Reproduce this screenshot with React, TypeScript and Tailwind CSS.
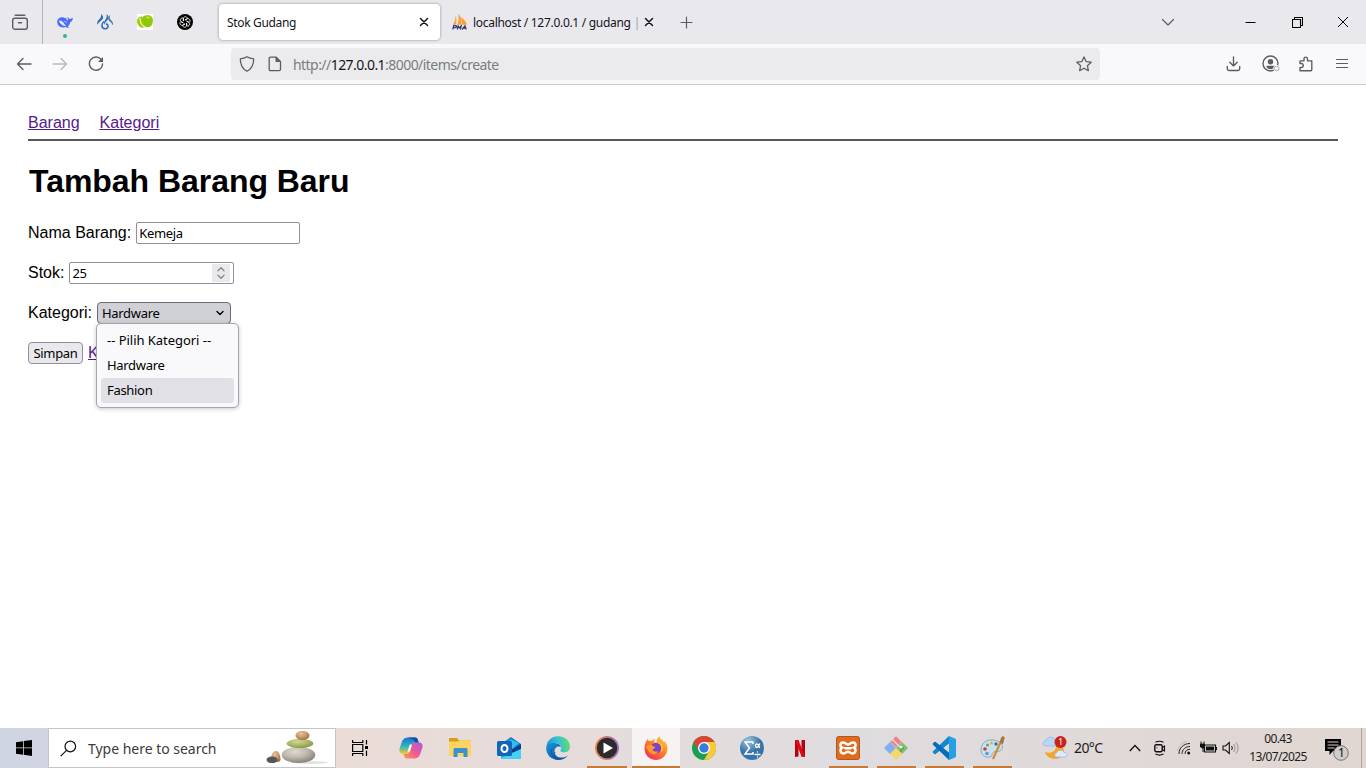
import React from "react";

type SvgProps = { s?: number; box?: string; className?: string; children: React.ReactNode };

function Svg({ s = 16, box = "0 0 16 16", className = "", children }: SvgProps) {
  return (
    <svg width={s} height={s} viewBox={box} fill="none" className={`block shrink-0 ${className}`}>
      {children}
    </svg>
  );
}

function Line({ s = 16, box = "0 0 16 16", d, w = 1.25, color = "#5b5b66" }: { s?: number; box?: string; d: string; w?: number; color?: string }) {
  return (
    <Svg s={s} box={box}>
      <path d={d} stroke={color} strokeWidth={w} strokeLinecap="round" strokeLinejoin="round" />
    </Svg>
  );
}

function Cross() {
  return <Line s={10} box="0 0 10 10" d="M1.500 1.500l7 7M8.500 1.500l-7 7" w={1.5} color="#15141a" />;
}

function TabStrip() {
  return (
    <header className="flex h-11 items-center bg-[#e9e9ed]">
      <div className="flex h-full w-[43px] items-center justify-center border-r border-[#b4b4ba] pr-0.5">
        <Svg>
          <path d="M3.200 1.200h9.600" stroke="#5b5b66" strokeWidth="1.400" strokeLinecap="round" />
          <rect x=".7" y="4.200" width="14.600" height="11" rx="2" stroke="#5b5b66" strokeWidth="1.400" />
          <path d="M6.500 8.800h3" stroke="#5b5b66" strokeWidth="1.500" strokeLinecap="round" />
        </Svg>
      </div>
      <div className="ml-[2px] flex h-full items-center">
        <div className="relative flex w-10 items-center justify-center">
          <Svg>
            <path d="M.2 7.600C.3 4.800 2.500 3.200 5 3.300c1.400 0 2.100.3 2.900.9.500-.4 1-.5 1.500-.3-.5.500-.3 1.100.2 1.700.4.500.8.900 1.200 1.200.1-1.600-.1-2.700-.5-3.500 1 .2 1.700.8 2.100 1.600 1.100.2 2-.2 3.400-1.100.1 2.200-.8 3.900-2.500 4.500-.3 1.700-1.200 3.100-2.500 4.100.6.4 1.200.5 1.900.7-1.200.8-2.800.7-3.900-.1C4.300 14.500.1 12.300.2 7.600z" fill="#4d6bfe" />
            <path d="M2 6.500c1.700-.2 3.400.7 4.500 2.300.8 1.200 1.600 2.400 2.700 2.800-1.500.7-3.500.1-4.900-1.300C3.100 9.200 2.100 7.900 2 6.500z" fill="#e9e9ed" />
            <path d="M7.400 7.500c.9-.3 1.800.3 2.100 1.300" stroke="#e9e9ed" strokeWidth=".8" />
          </Svg>
          <span className="absolute top-[20px] left-[18px] size-1 rounded-full bg-[#2fb597]" />
        </div>
        <div className="flex w-10 justify-center">
          <Svg>
            <path d="M4 0c2.500 1.500 2.800 4 .8 6C3.200 7.600 1.500 8.500.6 10.800-.3 8.500.5 7 2 5.400 3.600 3.700 4.500 2.500 4 0z" fill="#3070b4" />
            <path d="M9.500 0c2.500 1.800 2.800 4.300.7 6.500C8.700 8 7.800 9 8 11c-1-1.300-1.300-2.800-.3-4.200 1.500-2 2.600-3.800 1.800-6.800z" fill="#3070b4" />
            <path d="M7 7.500c-1.500 1.200-2.300 2.500-2.100 4.200.2 2 1.500 3.200 3.300 3.100 2-.1 3.200-1.600 2.700-3.300-.2-.9-1-1.500-1.900-1.400" stroke="#3070b4" strokeWidth="1.600" />
            <path d="M12.800 1.500c-.8 2.200-.4 3.300 1 4.700 1.400 1.300 2.300 2.700 1.800 4.600-.6-2-1.700-2.600-3-3.800-1.600-1.700-1.400-3.900.2-5.500z" fill="#3070b4" stroke="#3070b4" strokeWidth=".4" />
          </Svg>
        </div>
        <div className="flex w-10 justify-center">
          <Svg>
            <path fill="#fff" d="M0 0h16v16H0z" />
            <path d="M0 7c0-3 2.500-4.500 5-4.500L8 13c-4 2-8-1-8-6z" fill="#a5cb14" />
            <path d="M3 4c0 4 2 8 6 9.500" stroke="#eaf4a8" strokeWidth="1.200" />
            <path d="M5 5C5 2 8 1 10.500 1.200 14 1 16 3 15.900 6.500c0 4-2 6.800-5.200 6.800C7 13 5 9 5 5z" fill="#8fc80f" />
            <path d="M8.500 3.500c1.300-1.500 4-1.200 5.500.3-1.500 1-4.500 1-5.500-.3z" fill="#c4e62e" />
          </Svg>
        </div>
        <div className="flex w-10 justify-center">
          <Svg>
            <circle cx="8" cy="8" r="8" fill="#000" />
            <g stroke="#fff" strokeWidth=".8">
              {[0, 60, 120, 180, 240, 300].map((a) => (
                <path key={a} transform={`rotate(${a} 8 8)`} d="M6.400 7.100V4.600c0-2.400 3.700-2.500 4-.2M8 6.100l2.500-1.500" />
              ))}
            </g>
          </Svg>
        </div>
      </div>
      <div className="ml-[14px] flex h-9 w-[221px] items-center justify-between rounded bg-white pr-[11px] pl-2 shadow-[0_0_3px_rgba(0,0,0,0.4)]">
        <span className="pt-0.5 text-xs tracking-[-0.33px] whitespace-nowrap text-[#15141a]">Stok Gudang</span>
        <Cross />
      </div>
      <div className="ml-3 flex h-9 w-[202px] items-center">
        <Svg>
          <path d="M1 10.500C3 8.500 3.500 5 3.700 2.500c.7 2.500.8 5.500 0 8zM5.500 10.500C7 7.500 7 4 6.500.5c3 3 3.500 6.500 2.500 10zM10 10.500c.5-2.500 0-5-.8-7 2.800 1.500 5 4.500 5.300 7z" fill="#f89c2f" stroke="#f8ad55" strokeWidth=".5" />
          <g stroke="#34396d" strokeWidth="1.200">
            <path d="M.7 15.500l1-3.800h2.300c1 0 .8 2-.5 2H1.200M5.200 15.500l1-3.600 1 2 2-2-.8 3.600M10 15.500l3-3.700 1.200 3.700M11.200 14.200h2.600" />
          </g>
        </Svg>
        <div className="ml-[5px] flex w-[164px] pt-0.5 text-xs tracking-[-0.3px] whitespace-nowrap text-[#15141a]">
          localhost / 127.0.0.1 / gudang <span className="ml-[3px] text-[#9a9aa2]">|</span>
        </div>
        <div className="ml-[7px]"><Cross /></div>
      </div>
      <div className="ml-[26px]">
        <Line s={13} box="0 0 13 13" d="M6.500 1v11M1 6.500h11" w={1.2} />
      </div>
      <div className="ml-auto flex items-center">
        <Line s={14} box="0 0 14 14" d="M1.500 4.500L7 10l5.500-5.500" w={1.2} />
        <div className="ml-[70px]">
          <Svg s={11} box="0 0 11 11"><path d="M.5 5.500h10" stroke="#000" /></Svg>
        </div>
        <div className="ml-9">
          <Svg s={11} box="0 0 11 11"><path d="M.5 2.500h8v8h-8zM2.500 2.500v-2h8v8h-2" stroke="#000" strokeWidth="1.100" /></Svg>
        </div>
        <div className="mr-[17px] ml-[34px]">
          <Svg s={12} box="0 0 12 12"><path d="M1 1l10 10M11 1L1 11" stroke="#000" /></Svg>
        </div>
      </div>
    </header>
  );
}

function Toolbar() {
  return (
    <div className="flex h-[41px] items-center border-b border-[#cccccd] bg-[#f9f9fb]">
      <div className="ml-4 flex items-center gap-5">
        <Line d="M15 8H1.500M7 2.500L1.500 8 7 13.500" w={1.35} />
        <Line d="M1 8h13.500M9 2.500L14.500 8 9 13.500" color="#b9b9c0" w={1.35} />
        <Svg>
          <path d="M13 3.300A6.600 6.600 0 1 0 14.600 8" stroke="#5b5b66" strokeWidth="1.400" strokeLinecap="round" />
          <path d="M15 1v5H10z" fill="#5b5b66" />
        </Svg>
      </div>
      <div className="ml-[127px] flex h-8 w-[869px] items-center rounded bg-[#ebebed] px-2">
        <Line d="M8 .8c2 1.300 4.200 1.900 6.700 2.100 0 5.500-2 9.800-6.700 12.300C3.300 12.700 1.300 8.400 1.300 2.900 3.800 2.700 6 2.100 8 .8z" />
        <div className="ml-3">
          <Svg>
            <path d="M3.500 1.200h5.700L13.500 5.500v7.800c0 .8-.5 1.300-1.300 1.300H3.500c-.8 0-1.300-.5-1.300-1.300V2.500c0-.8.500-1.300 1.300-1.300z" stroke="#5b5b66" strokeWidth="1.300" />
            <path d="M8.500 1L13.500 6H9.500c-.6 0-1-.4-1-1z" fill="#5b5b66" />
          </Svg>
        </div>
        <span className="ml-[10px] pt-0.5 text-sm tracking-[-0.55px] whitespace-nowrap text-[#7b7b82]">
          http://<span className="text-[#15141a]">127.0.0.1</span>:8000/items/create
        </span>
        <div className="ml-auto">
          <Line d="M8 .9l2.100 4.700 5.100.6-3.800 3.500 1 5L8 12.200l-4.400 2.500 1-5L.8 6.200l5.100-.6z" />
        </div>
      </div>
      <div className="mr-4 ml-auto flex items-center gap-5">
        <Line d="M7.500.8v9M3.800 6.200l3.700 3.700 3.700-3.700M1.300 10.500v2.200c0 1 .8 1.800 1.800 1.800h8.800c1 0 1.800-.8 1.800-1.800v-2.200" w={1.35} />
        <Svg s={18} box="0 0 18 18" className="-mr-0.5">
          <circle cx="8.500" cy="8.500" r="7.500" stroke="#5b5b66" strokeWidth="1.400" />
          <circle cx="8.500" cy="6.800" r="2.700" fill="#5b5b66" />
          <path d="M4.300 10.700h8.400c-.3 2.200-2 3.600-4.200 3.600s-3.900-1.400-4.200-3.600z" fill="#5b5b66" />
          <circle cx="14.700" cy="13.400" r="3.300" fill="#f9f9fb" />
          <circle cx="14.700" cy="13.400" r="2.300" stroke="#ababb2" strokeWidth="1" />
        </Svg>
        <Line d="M2 7.500V4.800h4V3c0-2.600 3.500-2.600 3.500 0v1.800h4.300v9c0 .5-.4.900-.9.900H2v-3.200h1.300c2.600 0 2.600-4 0-4z" w={1.35} />
        <Line d="M2.500 3.500h11M2.500 7.500h11M2.500 11.500h11" w={1.2} />
      </div>
    </div>
  );
}

const control = "font-['Noto_Sans','Open_Sans',sans-serif] text-[13px] leading-[18px] tracking-[-0.32px] text-black";

function Page() {
  return (
    <main className="flex-1 bg-white px-7 pt-[29px] font-['Liberation_Sans',Arial,sans-serif] text-base leading-[18px] text-black">
      <nav className="flex gap-5 text-[#551a8b] underline">
        <a>Barang</a>
        <a>Kategori</a>
      </nav>
      <hr className="mt-[7px] h-0.5 border-0 bg-[#58585b]" />
      <h1 className="mt-[22px] ml-px text-[32px] leading-[37px] font-bold tracking-[-0.04px]">Tambah Barang Baru</h1>
      <form className="mt-[22px] flex flex-col items-start gap-[18px]">
        <label className="flex h-[22px] items-center">
          Nama Barang:
          <span className={`ml-[5px] flex h-[22px] w-[164px] items-center rounded-[2px] border border-[#8f8f9d] bg-white pl-0.5 ${control}`}>Kemeja</span>
        </label>
        <label className="flex h-[22px] items-center">
          Stok:
          <span className={`ml-[5px] flex h-[22px] w-[165px] items-center justify-between rounded-[2px] border border-[#8f8f9d] bg-white pr-[3px] pl-0.5 ${control}`}>
            25
            <span className="flex h-[18px] w-[18px] items-center justify-center bg-[#e9e9ed]">
              <Line s={14} box="0 0 14 14" d="M4 4.800l3-3 3 3M4 9.200l3 3 3-3" color="#85858d" w={1.3} />
            </span>
          </span>
        </label>
        <div className="flex h-[22px] items-center">
          Kategori:
          <div className="relative ml-[5px]">
            <div className={`flex h-[22px] w-[134px] items-center justify-between rounded-[4px] border border-[#6b6b78] bg-[#d0d0d7] pr-[5px] pl-1 ${control}`}>
              Hardware
              <Line s={10} box="0 0 10 10" d="M2 3.400l3 3 3-3" color="#000" w={1.4} />
            </div>
            <ul className={`absolute top-[21px] -left-px z-10 w-[143px] rounded-[5px] border border-[#a5a5ac] bg-[#f9f9fb] p-1 shadow-[0_1px_4px_rgba(0,0,0,0.22)] ${control}`}>
              <li className="h-[25px] rounded-[3px] px-1.5 leading-[25px] tracking-[-0.04px] whitespace-nowrap">-- Pilih Kategori --</li>
              <li className="h-[25px] rounded-[3px] px-1.5 leading-[25px]">Hardware</li>
              <li className="h-[25px] rounded-[3px] bg-[#e0e0e6] px-1.5 leading-[25px]">Fashion</li>
            </ul>
          </div>
        </div>
        <div className="flex h-[22px] items-center">
          <button type="button" className={`h-[22px] w-[55px] rounded-[4px] border border-[#8f8f9d] bg-[#e9e9ed] ${control}`}>Simpan</button>
          <a className="ml-[5px] text-[#551a8b] underline">K</a>
        </div>
      </form>
    </main>
  );
}

function Copilot() {
  return (
    <Svg s={24} box="0 0 24 24">
      <defs>
        <linearGradient id="cpa" x1="0" y1="0" x2="0" y2="1"><stop stopColor="#1974d2" /><stop offset=".5" stopColor="#28b3c4" /><stop offset="1" stopColor="#f1cd32" /></linearGradient>
        <linearGradient id="cpb" x1="1" y1="0" x2="0" y2="1"><stop stopColor="#a55be0" /><stop offset=".5" stopColor="#ef5795" /><stop offset="1" stopColor="#ff9a4c" /></linearGradient>
      </defs>
      <path d="M9 1.500h7c2 0 2.500 1 3 3l.8 2h-4c-1.500 0-2 .7-2.500 2.200l-2 6.800c-.5 1.700-1.500 2.500-3.300 2.500H4C.8 18-.2 15 .7 12L3 5.500C4 2.700 6 1.500 9 1.500z" fill="url(#cpa)" />
      <path d="M15 22.500H8c-2 0-2.500-1-3-3L4.500 18h3.700c1.500 0 2-.7 2.500-2.200l2-6.800c.5-1.700 1.500-2.500 3.300-2.500h4c3.200 0 4.200 2.500 3.300 5.500L21 18.500c-1 2.800-3 4-6 4z" fill="url(#cpb)" />
      <path d="M10.700 8.500h2.500l-2.300 7.300H8.500z" fill="#fff" opacity=".9" />
      <path d="M9 1.500h7c2 0 2.500 1 3 3l.8 2h-4l-1-2.500z" fill="#174ea8" />
    </Svg>
  );
}

function Explorer() {
  return (
    <Svg s={24} box="0 0 24 24">
      <path d="M1 3c0-.6.400-1 1-1h7l2 2.500h11c.6 0 1 .4 1 1V20H1z" fill="#d99a1e" />
      <path d="M1 5.500h9l1.500-1H23V20H1z" fill="#fcd462" />
      <path d="M5.500 21v-7.500c0-.8.700-1.500 1.500-1.500h11c.8 0 1.500.7 1.500 1.500V21h-4v-4h-6v4z" fill="#3a93d0" />
    </Svg>
  );
}

function Outlook() {
  return (
    <Svg s={24} box="0 0 24 24">
      <path d="M4 8l10-7 10 7v13c0 1-.8 2-2 2H6c-1 0-2-.8-2-2z" fill="#1b7fd0" />
      <path d="M4 13l10 5L24 8v13c0 1-.8 2-2 2H6c-1 0-2-.8-2-2z" fill="#24afe8" />
      <path d="M8 8l6-4.500L22 7l-7 6z" fill="#33bdf0" />
      <path d="M14 14l10-6v5l-8 5z" fill="#0b3f87" />
      <path d="M4 22l20-9v8c0 1-1 2-2 2H6c-1 0-2 0-2-1z" fill="#46d0f5" />
      <rect y="5" width="15" height="15" rx="1.500" fill="#1066bb" />
      <ellipse cx="7.500" cy="12.500" rx="3" ry="3.500" stroke="#fff" strokeWidth="2" />
    </Svg>
  );
}

function Edge() {
  return (
    <Svg s={24} box="0 0 24 24">
      <defs>
        <linearGradient id="edg" x1="0" y1=".5" x2="1" y2=".3"><stop stopColor="#2092d7" /><stop offset=".5" stopColor="#32c2d6" /><stop offset="1" stopColor="#68df64" /></linearGradient>
        <linearGradient id="edb" x1="0" y1="0" x2="1" y2="1"><stop stopColor="#1994d5" /><stop offset="1" stopColor="#0b4899" /></linearGradient>
      </defs>
      <path d="M.3 11C1 4.500 5.500.3 12 .3c7 0 12 4.800 12 10.200 0 4-2.800 5.800-5.700 5.800-3 0-4-1-4-1.800 0-.7 1-1 1-3 0-2.500-2.500-4.300-6-4.300-4.200 0-7.500 1.300-9 3.800z" fill="url(#edg)" />
      <path d="M.2 12C.4 8.800 4 6.800 8.500 7c3.500.2 6.500 2 6.500 4.200-2.700-1.800-6.500.1-6.500 4 0 4.300 4 7 8.500 6.300 2-.3 3.700-1.300 5-2.300-2 3-5.600 4.800-9.700 4.800C5.600 24 0 19 .2 12z" fill="url(#edb)" />
      <path d="M9 16c-.8 2-1.500 5 3.500 7.800C7 22 4.300 18 5.500 13.500" stroke="#0c59a4" />
    </Svg>
  );
}

function MediaPlayer() {
  return (
    <Svg s={24} box="0 0 24 24">
      <defs><linearGradient id="mp"><stop stopColor="#f08a3c" /><stop offset="1" stopColor="#a06fc0" /></linearGradient></defs>
      <circle cx="12" cy="12" r="12" fill="url(#mp)" />
      <circle cx="12" cy="12" r="10.300" fill="#2b2b2e" />
      <path d="M8.500 6.500v11L18 12z" fill="#fff" />
    </Svg>
  );
}

function Firefox() {
  return (
    <Svg s={24} box="0 0 24 24">
      <defs>
        <linearGradient id="ff" x1="1" y1="0" x2=".2" y2="1"><stop stopColor="#ffe03c" /><stop offset=".45" stopColor="#ff8a22" /><stop offset="1" stopColor="#f42a62" /></linearGradient>
      </defs>
      <path d="M2.500 5c.5-1 1-1.500 1.300-2 .2 1 .7 1.700 1.200 2 1-.3 2-.3 3 0C9 3.500 10.500 3 11.500 3c-1 1-1.500 2-1.300 3 1 .8 2 .8 2.800.8C12 5 13 2 15.500.2c.2 2 1.700 3.300 3.500 4.300.2 1 .7 1.500 1 2l.5-1.500c2 2 3 5 3 7.500C23.500 18.500 18.500 24 12 24S.5 19 .5 12.500C.5 9.500 1.300 7 2.500 5z" fill="url(#ff)" />
      <circle cx="12" cy="12" r="5.200" fill="#7a43c8" />
      <path d="M2 11c1.500-2.500 5-3 7-.8l2.500.5c-.5 1.500-2 2-3 2.600.5 2.300 3.500 3 5.500 1.600-1.500 3.700-6.200 4.500-9 1C3.500 14 3 12.500 2 11z" fill="#ff9a23" />
      <path d="M14 6.500c4 1 5.200 5.500 3.500 9" stroke="#ffbc32" strokeWidth="1.800" />
    </Svg>
  );
}

function Chrome() {
  return (
    <Svg s={24} box="0 0 24 24">
      <circle cx="12" cy="12" r="12" fill="#16a150" />
      <path d="M12 12l10.400-6A12 12 0 0 1 12 24l5.200-9z" fill="#fcc934" />
      <path d="M12 6h10.400L17.200 15z" fill="#fcc934" />
      <path d="M1.600 6A12 12 0 0 1 22.400 6H12a6 6 0 0 0-5.200 9z" fill="#db4437" />
      <circle cx="12" cy="12" r="6" fill="#fff" />
      <circle cx="12" cy="12" r="4.700" fill="#347be5" />
    </Svg>
  );
}

function Statistics() {
  return (
    <Svg s={24} box="0 0 24 24">
      <defs><radialGradient id="st" cx=".35" cy=".2"><stop stopColor="#9bc2df" /><stop offset="1" stopColor="#3972a9" /></radialGradient></defs>
      <circle cx="12" cy="12" r="12" fill="url(#st)" />
      <path d="M13 8V6H5l4.500 6L5 18h8v-2" stroke="#fff" strokeWidth="1.500" />
      <path d="M19.500 8c-1 4-4 4.500-4 1.500 0-2.500 3.300-2 4 2M15 18.500h5M17.500 16v.1M17.500 21v.1" stroke="#fff" strokeWidth="1.400" strokeLinecap="round" />
    </Svg>
  );
}

function Netflix() {
  return (
    <Svg s={18} box="0 0 18 18">
      <path d="M4 1h3.500v16.500L4 18zM10.500 1H14v17l-3.500-.5z" fill="#b1060f" />
      <path d="M4 1h3.500L14 18l-3.500-.5z" fill="#e50914" />
    </Svg>
  );
}

function Xampp() {
  return (
    <Svg s={24} box="0 0 24 24">
      <rect x=".5" y=".5" width="23" height="23" rx="2" fill="#e56a16" stroke="#a65b31" />
      <path d="M7 6.500c2.300 0 3 2 5 2s2.700-2 5-2c3.300 0 3.300 4.300.8 5.200 2.700 1.300 2 5.800-1.300 5.800-2 0-2.700-1.800-4.500-1.800S9.500 17.500 7.500 17.500c-3.300 0-4-4.500-1.300-5.800C3.700 10.800 3.700 6.500 7 6.500z" stroke="#fff" strokeWidth="2.500" />
      <path d="M9.500 12.200h5" stroke="#fff" strokeWidth="2.600" strokeLinecap="round" />
    </Svg>
  );
}

function Git() {
  return (
    <Svg s={24} box="0 0 24 24">
      <path d="M12 .7l5 5-5 5-5-5z" fill="#ef8086" stroke="#ef8086" strokeLinejoin="round" />
      <path d="M6 6.500l5.500 5.500L6 17.500.5 12z" fill="#80aff2" stroke="#80aff2" strokeLinejoin="round" />
      <path d="M18 6.500l5.500 5.500-5.500 5.500-5.500-5.500z" fill="#80bd68" stroke="#80bd68" strokeLinejoin="round" />
      <path d="M12 12.500l5.500 5.500-5.500 5.500L6.500 18z" fill="#f8d668" stroke="#f8d668" strokeLinejoin="round" />
      <path d="M7 2l9 9" stroke="#dedde0" strokeWidth="1.500" />
      <path d="M17 11v5M17 11.500l3 1" stroke="#4d8743" strokeWidth="1" />
      <circle cx="17" cy="11" r="1.500" fill="#eee" />
    </Svg>
  );
}

function VsCode() {
  return (
    <Svg s={24} box="0 0 24 24">
      <path d="M17 0L1 15.200c-.5.500-.5 1 0 1.500L2.300 18c.5.400 1 .4 1.400 0L17.500 7z" fill="#1487cc" />
      <path d="M17 24L1 8.800c-.5-.5-.5-1 0-1.500L2.300 6c.5-.4 1-.4 1.400 0L17.500 17z" fill="#086db6" />
      <path d="M17 0l6 2.500c.6.300 1 .8 1 1.500v16c0 .7-.4 1.200-1 1.500L17 24z" fill="#249fe8" />
    </Svg>
  );
}

function Paint() {
  return (
    <Svg s={26} box="0 0 26 26">
      <path d="M14 5C7 4 2 9 2 15c0 5 4 8 9 7 2.500-.5 1.500-3 3-4.500 2-2 7 .5 9-3.500 2-5-3-8.500-9-9z" fill="#c8e2ed" stroke="#729eb4" strokeWidth=".8" />
      <circle cx="6" cy="14" r="1.800" fill="#d33c39" /><circle cx="8.500" cy="10" r="1.600" fill="#69a954" /><circle cx="12.500" cy="8" r="1.500" fill="#e6b13e" /><circle cx="17" cy="9" r="1.700" fill="#346fae" /><circle cx="8" cy="18.500" r="1.800" fill="#5d98ca" />
      <path d="M23 4L14 24" stroke="#d48a35" strokeWidth="2.200" />
      <path d="M21 8l3 1 1.500-5.500C26 1 23 .5 22 3z" fill="#a8733e" />
    </Svg>
  );
}

type TaskIcon = { icon: React.ReactNode; slot: string; bar?: string };

const tasks: TaskIcon[] = [
  { icon: <Copilot />, slot: "w-[49px]" },
  { icon: <Explorer />, slot: "w-[49px]" },
  { icon: <Outlook />, slot: "w-[49px]" },
  { icon: <Edge />, slot: "w-[49px]" },
  { icon: <MediaPlayer />, slot: "w-[50px]", bar: "w-10" },
  { icon: <Firefox />, slot: "w-12 bg-[#f6f3f2]", bar: "w-12" },
  { icon: <Chrome />, slot: "w-12" },
  { icon: <Statistics />, slot: "w-12" },
  { icon: <Netflix />, slot: "w-12" },
  { icon: <Xampp />, slot: "w-12", bar: "w-[39px]" },
  { icon: <Git />, slot: "w-12", bar: "w-[39px]" },
  { icon: <VsCode />, slot: "w-12", bar: "w-[39px]" },
  { icon: <Paint />, slot: "w-12", bar: "w-[39px]" },
];

function Stones() {
  return (
    <svg width="64" height="36" viewBox="0 0 64 36" className="block">
      <defs>
        <radialGradient id="sg" cx=".4" cy=".3" r=".7"><stop stopColor="#dedacf" /><stop offset=".5" stopColor="#bfbaae" /><stop offset="1" stopColor="#88837a" /></radialGradient>
        <radialGradient id="sgr" cx=".4" cy=".3" r=".8"><stop stopColor="#ced69a" /><stop offset=".5" stopColor="#acb766" /><stop offset="1" stopColor="#7e8b35" /></radialGradient>
        <radialGradient id="sbr" cx=".4" cy=".3" r=".7"><stop stopColor="#e8c29c" /><stop offset=".6" stopColor="#c99464" /><stop offset="1" stopColor="#a36f43" /></radialGradient>
      </defs>
      <ellipse cx="45" cy="32.500" rx="18" ry="1.500" fill="#e4e2df" />
      <path d="M6 29c0-4 2-8 5-8s4.500 5 4.500 8-2 3-4.500 3-5 0-5-3z" fill="url(#sbr)" />
      <ellipse cx="7" cy="29.800" rx="5.500" ry="3.300" fill="#55575c" />
      <ellipse cx="33.500" cy="25" rx="16.800" ry="8" fill="url(#sg)" />
      <ellipse cx="35" cy="13.500" rx="13.300" ry="4.500" fill="url(#sgr)" />
      <ellipse cx="37.500" cy="5.500" rx="7" ry="4.500" fill="url(#sbr)" />
    </svg>
  );
}

function Tray() {
  return (
    <div className="ml-auto flex h-full items-center text-xs text-[#1c1c1c]">
      <Svg s={26} box="0 0 26 26">
        <path d="M21 12c3 7-2 12-8 12-5 0-9-3-10-7 5 2 11 0 11-6z" fill="#f4a52b" />
        <path d="M4 11c-4 0-4-5 0-5 1-5 8-5 9-1 4-1 5 6 1 6z" fill="#b9d7f3" stroke="#88b5e2" strokeWidth=".7" />
        <path d="M15 22c-3 0-3-4 0-4.500 1-3 6-3 7 0 4 0 4 4.500 1 4.500z" fill="#dceafa" stroke="#93b7df" strokeWidth=".7" />
        <circle cx="18.500" cy="7" r="6" fill="#c9231d" />
        <text x="16.200" y="10" fontSize="8.500" fill="#fff">1</text>
      </Svg>
      <span className="ml-[6px] w-[30px] text-sm tracking-[-0.6px] whitespace-nowrap">20°C</span>
      <div className="ml-[25px]"><Svg s={12} box="0 0 12 12"><path d="M.8 9L6 3.500 11.200 9" stroke="#111" strokeWidth="1.300" /></Svg></div>
      <div className="ml-[11px]">
        <Svg><path d="M3.500 2.300c2.500-1.300 5.500-1.300 8 0M3.500 14c2.500 1.300 5.500 1.300 8 0" stroke="#111" strokeWidth="1.200" /><rect x="2.800" y="4.800" width="7.400" height="7" rx="1.500" stroke="#111" strokeWidth="1.400" /><path d="M10.500 7.500l2-1.500v5l-2-1.500M5 7.800h.1" stroke="#111" strokeWidth="1.100" strokeLinecap="round" /></Svg>
      </div>
      <div className="ml-[9px]">
        <Svg><path d="M2 14C2 8 6.500 3.500 13 3.500M5 14c0-4.500 3.500-7.500 8-7.500M8 14c0-3 2-4.700 5-4.700" stroke="#222" strokeWidth="1" /><path d="M.5 11C1.500 6 5 2.500 9.500 1.500" stroke="#aaa" strokeWidth=".7" /><circle cx="11.700" cy="13" r="1.500" fill="#111" /></Svg>
      </div>
      <div className="ml-[6px]">
        <Svg s={18} box="0 0 18 18"><path d="M5.500 6h11v7h-11z" stroke="#111" strokeWidth="1.200" /><path d="M7 7.500h8v4H7zM16.500 8h1.500v3h-1.500zM1 4.500h5V8L4.500 9.500V13h-1V9.500L1 8z" fill="#111" /><path d="M2 2.500v2M5 2.500v2" stroke="#111" /></Svg>
      </div>
      <div className="ml-[5px]">
        <Svg s={18} box="0 0 18 18"><path d="M1 7h2.500L7.300 3.500v11L3.500 11H1z" stroke="#111" strokeWidth="1.100" /><path d="M9.500 7c1 1.300 1 2.700 0 4" stroke="#111" /><path d="M11.500 5c2 2.700 2 5.300 0 8M14 3.500c2.700 3.700 2.700 7.300 0 11" stroke="#8b8b8b" strokeWidth=".9" /></Svg>
      </div>
      <div className="ml-[4px] w-[68px] text-center leading-[18px] tracking-[-0.62px] whitespace-nowrap">
        <div>00.43</div>
        <div>13/07/2025</div>
      </div>
      <div className="mr-[11px] ml-[12px]">
        <Svg s={26} box="0 0 26 26">
          <path d="M1 4h16v12H9l-3.500 4v-4H1z" fill="#000" />
          <path d="M3.500 7h11M3.500 10h11M3.500 13h7" stroke="#d5d0cf" />
          <circle cx="17" cy="18" r="7.300" fill="#cfccca" stroke="#777" />
          <text x="14" y="22.300" fontSize="12" fill="#111">1</text>
        </Svg>
      </div>
      <div className="h-full w-[5px] border-l border-[#aba5a5]" />
    </div>
  );
}

function Taskbar() {
  return (
    <footer className="flex h-10 bg-linear-to-r from-[#d0d5e2] via-[#dedde0] via-62% to-[#dfd4cf]">
      <div className="flex w-12 items-center justify-center">
        <Svg><path d="M0 2.200L7 1.200v6.300H0zM7.800 1.100L16 0v7.500H7.800zM0 8.300h7v6.400l-7-1zM7.800 8.300H16V16l-8.200-1.200z" fill="#000" /></Svg>
      </div>
      <div className="flex w-[288px] items-center border border-[#c4c5c8] bg-white pl-[11px]">
        <Svg s={17} box="0 0 17 17"><circle cx="10.300" cy="6.500" r="5.300" stroke="#111" strokeWidth="1.200" /><path d="M6.500 10.300L.7 16.200" stroke="#111" strokeWidth="1.200" /></Svg>
        <span className="ml-[11px] pt-0.5 text-sm tracking-[-0.02px] whitespace-nowrap text-[#3b3b3b]">Type here to search</span>
        <div className="mr-[6px] ml-auto"><Stones /></div>
      </div>
      <div className="flex flex-1 bg-linear-to-r from-[#ebdcd7] via-[#dfdcdf] via-50% to-[#e1d6d1]">
        <div className="mr-[2px] flex w-12 items-center justify-center">
          <Svg><path d="M.6 0v2.500h10.200V0M.6 4.500v7h10.200v-7zM.6 16v-2.500h10.200V16M14.500 0v4.500M14.500 10.500V16" stroke="#000" strokeWidth="1.200" /><path d="M13 6h3v3h-3z" fill="#000" /></Svg>
        </div>
        {tasks.map((t, i) => (
          <div key={i} className={`flex flex-col items-center ${t.slot}`}>
            <div className="flex h-[38px] items-center justify-center pt-0.5">{t.icon}</div>
            {t.bar && <div className={`h-0.5 bg-[#c77a36] ${t.bar}`} />}
          </div>
        ))}
        <Tray />
      </div>
    </footer>
  );
}

export default function App() {
  return (
    <div className="flex h-[768px] w-[1366px] flex-col overflow-hidden font-['Noto_Sans','Open_Sans',sans-serif]">
      <TabStrip />
      <Toolbar />
      <Page />
      <Taskbar />
    </div>
  );
}
